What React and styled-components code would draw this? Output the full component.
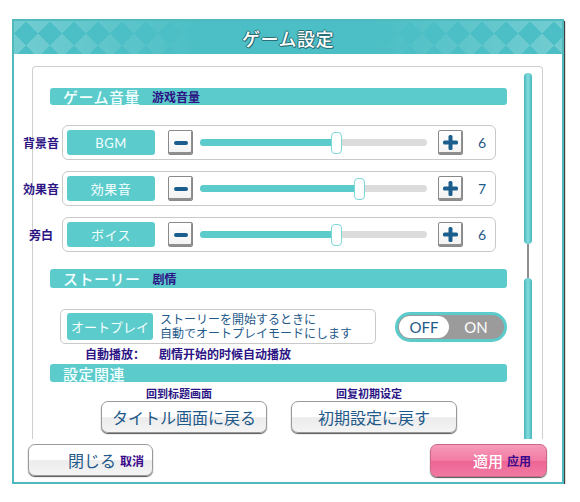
import React from 'react';
import styled, { createGlobalStyle } from 'styled-components';

const JP = `"Lato", "Noto Sans CJK JP", sans-serif`;
const SC = `"Noto Sans CJK SC", sans-serif`;
const TEAL = '#5ccbcb';
const NAVY = '#1f5a8a';
const PURPLE = '#2c1485';

const GlobalStyle = createGlobalStyle`
  html, body {
    margin: 0;
    padding: 0;
    background: #fff;
  }
  body {
    font-family: ${JP};
  }
`;

const Window = styled.div`
  box-sizing: border-box;
  width: 552px;
  height: 465px;
  margin: 19px 0 0 12px;
  border: 2px solid #4fb9be;
  box-shadow: 1px 2px 1px rgba(0, 0, 0, 0.75);
  background: #fff;
  display: flex;
  flex-direction: column;
`;

const Header = styled.div`
  position: relative;
  height: 33px;
  flex: none;
  background: #4bbfc5;
  display: flex;
  align-items: center;
  justify-content: center;
  overflow: hidden;

  &::before {
    content: '';
    position: absolute;
    inset: 0;
    background-image:
      linear-gradient(45deg, rgba(255,255,255,0.22) 25%, transparent 25%, transparent 75%, rgba(255,255,255,0.22) 75%),
      linear-gradient(-45deg, rgba(255,255,255,0.22) 25%, transparent 25%, transparent 75%, rgba(255,255,255,0.22) 75%);
    background-size: 24px 24px;
    -webkit-mask-image: linear-gradient(to right, #000, transparent 35%, transparent 65%, #000);
    mask-image: linear-gradient(to right, #000, transparent 35%, transparent 65%, #000);
  }
`;

const Title = styled.h1`
  position: relative;
  margin: 0;
  font-family: ${JP};
  font-size: 18px;
  font-weight: 500;
  color: #fff;
  letter-spacing: 0.5px;
  text-shadow: -1px 0 #2a6f76, 1px 0 #2a6f76, 0 -1px #2a6f76, 0 1px #2a6f76, 1px 1px #2a6f76;
`;

const Panel = styled.div`
  box-sizing: border-box;
  height: 373px;
  margin: 12px 19px 0 18px;
  border: 1px solid #cfcfcf;
  border-bottom: none;
  border-radius: 4px 4px 0 0;
  display: flex;
`;

const Content = styled.div`
  flex: 1;
  padding: 21px 0 0 17px;
  display: flex;
  flex-direction: column;
`;

const ScrollTrack = styled.div`
  width: 8px;
  margin: 6px 10px 0 17px;
  display: flex;
  flex-direction: column;
  align-items: center;
`;

const ScrollThumb = styled.div`
  width: 8px;
  height: ${p => (p.$grow ? 'auto' : `${p.$h}px`)};
  flex: ${p => (p.$grow ? 1 : 'none')};
  border-radius: ${p => (p.$grow ? '4px 4px 0 0' : '4px')};
  background: linear-gradient(to right, #45b8bf, #86dcdc 50%, #45b8bf);
`;

const ScrollLine = styled.div`
  width: 2px;
  height: 34px;
  background: #8e8e8e;
`;

const SectionBar = styled.div`
  height: ${p => p.$h || 18}px;
  margin-top: ${p => p.$mt || 0}px;
  border-radius: 3px;
  background: ${TEAL};
  display: flex;
  align-items: center;
  padding-left: 13px;
  gap: 12px;
`;

const BarTitle = styled.span`
  font-family: ${JP};
  font-size: 15px;
  font-weight: 500;
  color: #f4ffff;
  letter-spacing: 0.5px;
`;

const BarSub = styled.span`
  font-family: ${SC};
  font-size: 12px;
  font-weight: 700;
  color: ${PURPLE};
`;

const Row = styled.div`
  display: flex;
  align-items: center;
  margin-left: -28px;
  margin-top: ${p => p.$mt}px;
`;

const SideLabel = styled.span`
  width: 38px;
  flex: none;
  text-align: center;
  font-family: ${SC};
  font-size: 12px;
  font-weight: 700;
  color: ${PURPLE};
  margin-right: 2px;
`;

const VolumeBox = styled.div`
  box-sizing: border-box;
  width: 434px;
  height: 35px;
  border: 1.5px solid #c9c9c9;
  border-radius: 6px;
  display: flex;
  align-items: center;
  padding-left: 4px;
`;

const Tag = styled.div`
  width: ${p => p.$w}px;
  height: ${p => p.$h}px;
  flex: none;
  border-radius: 3px;
  background: ${TEAL};
  color: #f4ffff;
  font-family: ${JP};
  font-size: ${p => p.$fs || 13}px;
  white-space: nowrap;
  display: flex;
  align-items: center;
  justify-content: center;
  letter-spacing: ${p => (p.$tight ? 0 : 0.5)}px;
`;

const StepButton = styled.button`
  box-sizing: border-box;
  width: 25px;
  height: 25px;
  flex: none;
  padding: 0;
  margin-left: ${p => p.$ml}px;
  border: 1px solid #8a8a8a;
  border-radius: 2px;
  background: linear-gradient(#fff, #f2f2f2);
  box-shadow: inset -1px -2px 0 #8f8f8f;
  display: flex;
  align-items: center;
  justify-content: center;
`;

const Track = styled.div`
  position: relative;
  width: 227px;
  height: 7px;
  margin-left: 7px;
  border-radius: 4px;
  background: #dcdcdc;
`;

const Fill = styled.div`
  height: 100%;
  border-radius: 4px;
  background: ${TEAL};
`;

const Thumb = styled.div`
  position: absolute;
  top: 50%;
  box-sizing: border-box;
  width: 11px;
  height: 22px;
  margin-left: -5px;
  transform: translateY(-50%);
  border: 1.5px solid #7ed6d6;
  border-radius: 4px;
  background: #fff;
`;

const Value = styled.span`
  margin-left: 15px;
  font-family: "Lato", sans-serif;
  font-size: 14px;
  color: ${NAVY};
`;

const StoryRow = styled.div`
  display: flex;
  align-items: center;
  justify-content: space-between;
  margin-top: 21px;
  margin-left: 10px;
`;

const AutoBox = styled.div`
  box-sizing: border-box;
  width: 316px;
  height: 35px;
  border: 1px solid #c9c9c9;
  border-radius: 5px;
  display: flex;
  align-items: center;
  padding-left: 6px;
  gap: 7px;
`;

const AutoDesc = styled.div`
  font-family: ${JP};
  font-size: 12px;
  line-height: 14px;
  color: ${NAVY};
  white-space: nowrap;
`;

const Toggle = styled.div`
  box-sizing: border-box;
  width: 112px;
  height: 30px;
  border: 3px solid ${TEAL};
  border-radius: 15px;
  background: #9b9b9b;
  display: flex;
  align-items: center;
  padding: 0 1px;
`;

const ToggleOption = styled.span`
  width: ${p => (p.$on ? 50 : 54)}px;
  height: 22px;
  border-radius: 11px;
  background: ${p => (p.$on ? '#fff' : 'transparent')};
  color: ${p => (p.$on ? NAVY : '#fff')};
  font-family: "Lato", sans-serif;
  font-size: 15px;
  display: flex;
  align-items: center;
  justify-content: center;
`;

const Note = styled.div`
  display: flex;
  gap: 14px;
  margin: 2px 0 2px 35px;
  font-family: ${SC};
  font-size: 12px;
  font-weight: 700;
  line-height: 16px;
  color: ${PURPLE};
`;

const ActionRow = styled.div`
  display: flex;
  gap: 24px;
  padding-left: 51px;
  margin-top: 5px;
`;

const ActionCol = styled.div`
  width: 166px;
  display: flex;
  flex-direction: column;
  align-items: center;
  gap: 1px;
`;

const Caption = styled.span`
  font-family: ${SC};
  font-size: 11px;
  font-weight: 700;
  line-height: 13px;
  color: ${PURPLE};
  margin-right: 10px;
`;

const WhiteButton = styled.button`
  box-sizing: border-box;
  width: ${p => p.$w}px;
  height: 32px;
  border: 1px solid #9a9a9a;
  border-radius: 7px;
  background: linear-gradient(#ffffff 0%, #ffffff 50%, #ececec 52%, #f4f4f4 100%);
  box-shadow: 0 1px 1px #555;
  font-family: ${JP};
  font-size: 16px;
  color: ${NAVY};
  display: flex;
  align-items: center;
  justify-content: ${p => p.$justify || 'center'};
  padding: 0 ${p => p.$pr || 0}px 0 0;
  gap: 4px;
`;

const Footer = styled.div`
  display: flex;
  justify-content: space-between;
  margin: 5px 15px 0 14px;
`;

const PinkButton = styled.button`
  box-sizing: border-box;
  width: 117px;
  height: 33px;
  border: 1px solid #c9688a;
  border-radius: 7px;
  background: linear-gradient(#f79bbb 0%, #f27aa3 50%, #ee6494 52%, #f07aa2 100%);
  box-shadow: 0 1px 1px #555;
  display: flex;
  align-items: center;
  justify-content: flex-end;
  padding-right: 15px;
  gap: 4px;
`;

const BtnSub = styled.span`
  font-family: ${SC};
  font-size: 12px;
  font-weight: 700;
  color: #3a0a8a;
`;

const BtnMain = styled.span`
  font-family: ${JP};
  font-size: ${p => p.$fs || 16}px;
  font-weight: ${p => p.$weight || 400};
  color: ${p => p.$color || NAVY};
`;

const Minus = () => (
  <svg width="14" height="6" viewBox="0 0 14 6">
    <rect x="0" y="1" width="14" height="4" rx="2" fill="#1b5e8e" />
  </svg>
);

const Plus = () => (
  <svg width="15" height="15" viewBox="0 0 15 15">
    <rect x="0" y="5.5" width="15" height="4" rx="1.5" fill="#1b5e8e" />
    <rect x="5.5" y="0" width="4" height="15" rx="1.5" fill="#1b5e8e" />
  </svg>
);

const volumes = [
  { side: '背景音', tag: 'BGM', value: 6, mt: 20 },
  { side: '効果音', tag: '効果音', value: 7, mt: 11 },
  { side: '旁白', tag: 'ボイス', value: 6, mt: 11 },
];

const VolumeRow = ({ side, tag, value, mt }) => (
  <Row $mt={mt}>
    <SideLabel>{side}</SideLabel>
    <VolumeBox>
      <Tag $w={88} $h={25}>{tag}</Tag>
      <StepButton $ml={13}><Minus /></StepButton>
      <Track>
        <Fill style={{ width: `${value * 10}%` }} />
        <Thumb style={{ left: `${value * 10}%` }} />
      </Track>
      <StepButton $ml={11}><Plus /></StepButton>
      <Value>{value}</Value>
    </VolumeBox>
  </Row>
);

export default function App() {
  return (
    <>
      <GlobalStyle />
      <Window>
        <Header>
          <Title>ゲーム設定</Title>
        </Header>
        <Panel>
          <Content>
            <SectionBar $h={17}>
              <BarTitle>ゲーム音量</BarTitle>
              <BarSub>游戏音量</BarSub>
            </SectionBar>
            {volumes.map(v => (
              <VolumeRow key={v.side} {...v} />
            ))}

            <SectionBar $h={19} $mt={17}>
              <BarTitle>ストーリー</BarTitle>
              <BarSub>剧情</BarSub>
            </SectionBar>
            <StoryRow>
              <AutoBox>
                <Tag $w={86} $h={27} $fs={13} $tight>オートプレイ</Tag>
                <AutoDesc>
                  ストーリーを開始するときに<br />
                  自動でオートプレイモードにします
                </AutoDesc>
              </AutoBox>
              <Toggle>
                <ToggleOption $on>OFF</ToggleOption>
                <ToggleOption>ON</ToggleOption>
              </Toggle>
            </StoryRow>
            <Note>
              <span>自動播放：</span>
              <span>剧情开始的时候自动播放</span>
            </Note>

            <SectionBar $h={18}>
              <BarTitle>設定関連</BarTitle>
            </SectionBar>
            <ActionRow>
              <ActionCol>
                <Caption>回到标题画面</Caption>
                <WhiteButton $w={166}>タイトル画面に戻る</WhiteButton>
              </ActionCol>
              <ActionCol>
                <Caption>回复初期设定</Caption>
                <WhiteButton $w={166}>初期設定に戻す</WhiteButton>
              </ActionCol>
            </ActionRow>
          </Content>
          <ScrollTrack>
            <ScrollThumb $h={171} />
            <ScrollLine />
            <ScrollThumb $grow />
          </ScrollTrack>
        </Panel>
        <Footer>
          <WhiteButton $w={125} $justify="flex-end" $pr={8}>
            <BtnMain>閉じる</BtnMain>
            <BtnSub>取消</BtnSub>
          </WhiteButton>
          <PinkButton>
            <BtnMain $fs={15} $weight={500} $color="#fff">適用</BtnMain>
            <BtnSub>应用</BtnSub>
          </PinkButton>
        </Footer>
      </Window>
    </>
  );
}
